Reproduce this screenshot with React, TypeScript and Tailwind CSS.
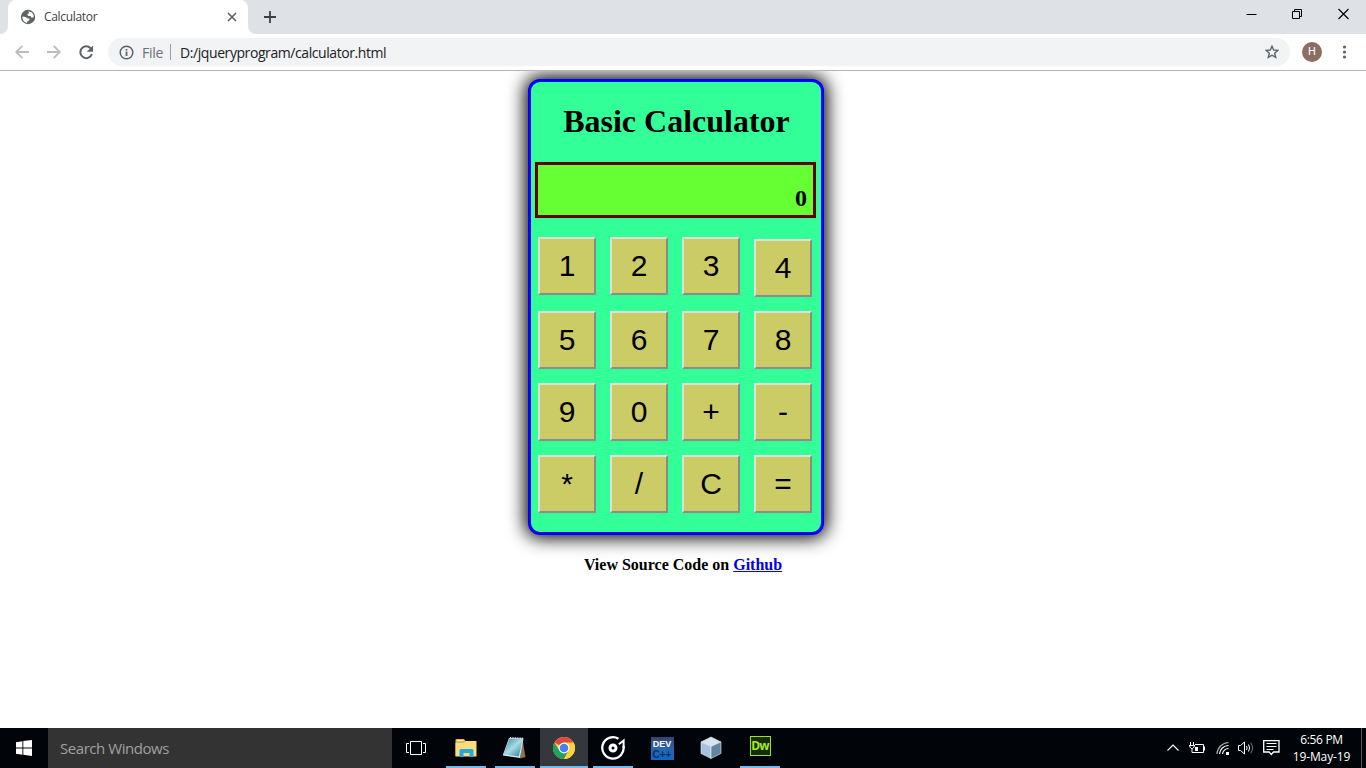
import React from "react";

const ui = "font-['Open_Sans','Noto_Sans',sans-serif]";

function Globe() {
  return (
    <svg width="16" height="16" viewBox="0 0 16 16">
      <circle cx="8" cy="8" r="7.2" fill="#5f6368" />
      <path d="M8.2 2.2 L12 3.4 L13.6 6 L13.6 8.6 L11 8.4 L10.6 7 L8.6 7 L7.4 6 L7.8 4.6 L9.2 4.4Z M2.4 7.6 L5.6 8 L7.6 9.4 L9.6 9.6 L9.2 11.4 L7.6 12 L7 13.9 A6 6 0 0 1 2.4 7.6Z" fill="#fff" />
    </svg>
  );
}

function TabStrip() {
  return (
    <div className="flex h-[34px] bg-[#dee1e6]">
      <div className="flex h-full w-2 bg-white">
        <div className="h-full w-full rounded-br-lg bg-[#dee1e6]" />
      </div>
      <div className="flex h-full w-60 items-center rounded-t-lg bg-white pl-3">
        <Globe />
        <span className="ml-2 text-[12px] leading-4 tracking-[-0.32px] text-[#3c4043]">Calculator</span>
        <svg className="mr-[11px] ml-auto" width="10" height="10" viewBox="0 0 10 10">
          <path d="M1 1 L9 9 M9 1 L1 9" stroke="#5f6368" strokeWidth="1.7" />
        </svg>
      </div>
      <div className="flex h-full w-2 bg-white">
        <div className="h-full w-full rounded-bl-lg bg-[#dee1e6]" />
      </div>
      <svg className="mt-[11px] ml-2" width="12" height="12" viewBox="0 0 12 12">
        <path d="M6 0 V12 M0 6 H12" stroke="#3c4043" strokeWidth="1.8" />
      </svg>
      <div className="ml-auto flex h-7 items-center">
        <svg className="mr-[35px]" width="11" height="12" viewBox="0 0 11 12">
          <path d="M0.5 6.5 H10.5" stroke="#000" />
        </svg>
        <svg className="mr-[35px]" width="11" height="12" viewBox="0 0 11 12">
          <path d="M0.5 3.5 H7.5 V10.5 H0.5Z M2.5 3.5 V1.5 H9.5 V8.5 H7.5" fill="none" stroke="#000" />
        </svg>
        <svg className="mr-[17px]" width="11" height="12" viewBox="0 0 11 12">
          <path d="M0.5 1 L10.5 11 M10.5 1 L0.5 11" stroke="#000" strokeWidth="1.1" />
        </svg>
      </div>
    </div>
  );
}

function Toolbar() {
  return (
    <div className="flex h-[37px] items-center border-b border-[#b5b4b6] bg-white pl-[15px]">
      <svg width="14" height="14" viewBox="0 0 14 14" fill="none" stroke="#babcbe" strokeWidth="1.8">
        <path d="M14 7 H1.5 M7.3 0.8 L1.2 7 L7.3 13.2" />
      </svg>
      <svg className="ml-[18px]" width="14" height="14" viewBox="0 0 14 14" fill="none" stroke="#babcbe" strokeWidth="1.8">
        <path d="M0 7 H12.5 M6.7 0.8 L12.8 7 L6.7 13.2" />
      </svg>
      <svg className="ml-[18px]" width="15" height="15" viewBox="0 0 15 15">
        <path d="M11.6 3.2 A5.9 5.9 0 1 0 12.9 9" fill="none" stroke="#5f6368" strokeWidth="2" />
        <path d="M14 0.5 V6.7 H7.8Z" fill="#5f6368" />
      </svg>
      <div className="ml-[14px] flex h-7 w-[1182px] items-center rounded-full bg-[#f1f3f4] pr-[11px] pl-[11px] text-[14px]">
        <svg width="15" height="15" viewBox="0 0 15 15">
          <circle cx="7.5" cy="7.5" r="6.3" fill="none" stroke="#5f6368" strokeWidth="1.5" />
          <path d="M7.5 6.6 V11 M7.5 4 V5.6" stroke="#5f6368" strokeWidth="1.8" />
        </svg>
        <span className="ml-2 w-[22px] tracking-[-0.3px] text-[#6d7175]">File</span>
        <div className="ml-[6px] h-4 w-px bg-[#9aa0a6]" />
        <span className="ml-[9px] tracking-[-0.42px] whitespace-nowrap text-[#202124]">D:/jqueryprogram/calculator.html</span>
        <svg className="ml-auto" width="14" height="14" viewBox="0 0 14 14">
          <path d="M7 1.2 L8.7 5 L12.9 5.4 L9.7 8.2 L10.7 12.4 L7 10.2 L3.3 12.4 L4.3 8.2 L1.1 5.4 L5.3 5Z" fill="none" stroke="#5f6368" strokeWidth="1.4" />
        </svg>
      </div>
      <div className="ml-3 flex h-5 w-5 items-center justify-center rounded-full bg-[#8d6e63] font-[Roboto,sans-serif] text-[11px] text-white">H</div>
      <svg className="ml-[20px]" width="5" height="14" viewBox="0 0 5 14" fill="#5f6368">
        <circle cx="2.5" cy="2" r="1.6" />
        <circle cx="2.5" cy="7" r="1.6" />
        <circle cx="2.5" cy="12" r="1.6" />
      </svg>
    </div>
  );
}

const rows = [
  ["1", "2", "3", "4"],
  ["5", "6", "7", "8"],
  ["9", "0", "+", "-"],
  ["*", "/", "C", "="],
];

function Key({ label }: { label: string }) {
  return (
    <button
      className={
        "h-[58px] w-[58px] border-2 border-t-[#dedede] border-r-[#8b8b8b] border-b-[#8b8b8b] border-l-[#dedede] bg-[#cccc66] p-0 text-center font-['Liberation_Sans',Arial,sans-serif] text-[30px] leading-[54px] text-black " +
        (label === "4" ? "mt-0.5" : "")
      }
    >
      {label}
    </button>
  );
}

function Calculator() {
  return (
    <div className="h-[456px] w-[296px] rounded-xl border-[3px] border-[#0000ff] bg-[#33ff99] shadow-[0_0_18px_3px_#000]">
      <h1 className="pt-[21px] pl-[1px] text-center text-[32px] leading-[37px] font-bold">Basic Calculator</h1>
      <div className="mt-[22px] ml-1 flex h-14 w-[281px] items-end justify-end border-[3px] border-[#660000] bg-[#66ff33] pr-[6px] pb-[3px] text-[24px] leading-[27px] font-bold">
        0
      </div>
      <div className="mt-[19px] ml-[7px] flex flex-col">
        {rows.map((row, i) => (
          <div key={i} className={"flex items-start gap-[14px] " + (i === 0 ? "h-[74px]" : "h-[72px]")}>
            {row.map((k) => (
              <Key key={k} label={k} />
            ))}
          </div>
        ))}
      </div>
    </div>
  );
}

function TaskItem({ open, active, children }: { open?: boolean; active?: boolean; children: React.ReactNode }) {
  return (
    <div className={"ml-px flex h-10 w-12 flex-col items-center " + (active ? "bg-[#34373b]" : "")}>
      <div className="flex h-[38px] items-center justify-center pt-0.5">{children}</div>
      <div className={"h-0.5 " + (active ? "w-12 " : "w-10 ") + (open || active ? "bg-[#76b9ed]" : "")} />
    </div>
  );
}

function Taskbar() {
  return (
    <div className="flex h-10 bg-[#010408]">
      <div className="flex w-12 items-center justify-center">
        <svg width="16" height="16" viewBox="0 0 16 16" fill="#fff">
          <path d="M0 2.2 L6.4 1.3 V7.5 H0Z M7.3 1.1 L16 0 V7.5 H7.3Z M0 8.4 H6.4 V14.7 L0 13.8Z M7.3 8.4 H16 V16 L7.3 14.8Z" />
        </svg>
      </div>
      <div className="flex w-[344px] items-center bg-[#333333] pl-3 text-[15px] tracking-[-0.45px] text-[#a0a0a0]">Search Windows</div>
      <div className="mr-px flex w-12 items-center justify-center">
        <svg width="20" height="16" viewBox="0 0 20 16" fill="none" stroke="#fff">
          <path d="M4.5 1.5 H15.5 V14.5 H4.5Z M3 3.5 H0.5 V12.5 H3 M17 3.5 H19.5 V12.5 H17" />
        </svg>
      </div>
      <TaskItem open>
        <svg className="-ml-px" width="22" height="20" viewBox="0 0 22 20">
          <path d="M0.5 2 Q0.5 1 1.5 1 H9 L10.5 3 H20 V18 H0.5Z" fill="#e8b64c" />
          <path d="M2 2.5 H8.5" stroke="#fff0b4" strokeWidth="1" />
          <path d="M0.5 5 H9 L11 3 H21.5 V18.5 H0.5Z" fill="#fddc7b" />
          <path d="M4.5 19 V12.5 Q4.5 11 6 11 H17 Q18.5 11 18.5 12.5 V19 H14.5 V15 H8.5 V19Z" fill="#25a8df" />
        </svg>
      </TaskItem>
      <TaskItem open>
        <svg className="-ml-0.5" width="24" height="24" viewBox="0 0 24 24">
          <defs>
            <linearGradient id="note" x1="0" y1="0" x2="1" y2="1">
              <stop offset="0" stopColor="#377f94" />
              <stop offset="0.5" stopColor="#a6dce8" />
              <stop offset="1" stopColor="#28758d" />
            </linearGradient>
          </defs>
          <path d="M20.5 3 L23.5 21 L18 22.5Z" fill="#8a7259" />
          <path d="M0.8 19.5 L7 2 L21.5 2.5 L18 22Z" fill="#e1edf0" />
          <path d="M1.2 18.5 L7.5 2.5 L21 3 L16.8 20.5Z" fill="url(#note)" />
          <path d="M8 1.8 L21.5 2.4" stroke="#e8e8e8" strokeWidth="1.5" strokeDasharray="1 0.7" />
        </svg>
      </TaskItem>
      <TaskItem active>
        <svg width="22" height="22" viewBox="0 0 22 22">
          <circle cx="11" cy="11" r="11" fill="#fdd23e" />
          <path d="M11 11 L1.47 5.5 A11 11 0 0 1 20.53 5.5Z" fill="#de4b3d" />
          <path d="M1.47 5.5 A11 11 0 0 0 11 22 L15.5 13.8 L11 11 L6.3 13.5Z" fill="#21a15e" />
          <path d="M11 5.5 H20.53 A11 11 0 0 1 11 22 L16 13.6Z" fill="#fdd23e" />
          <circle cx="11" cy="11" r="5.4" fill="#fff" />
          <circle cx="11" cy="11" r="4.3" fill="#4a80ee" />
        </svg>
      </TaskItem>
      <TaskItem open>
        <svg width="26" height="26" viewBox="0 0 26 26" fill="none" stroke="#fff">
          <path d="M18.5 3.7 A10.7 10.7 0 1 0 23.5 11" strokeWidth="2.3" />
          <circle cx="13" cy="13" r="3" strokeWidth="3" />
          <path d="M18.8 9.3 L23.6 5.5 V13" strokeWidth="2" />
        </svg>
      </TaskItem>
      <TaskItem>
        <div className="flex h-[23px] w-[23px] flex-col items-center overflow-hidden bg-linear-to-b from-[#33446f] via-[#2765ae] to-[#1267c4] font-['Liberation_Sans',sans-serif] font-bold">
          <span className="mt-px text-[9px] leading-[12px] text-white">DEV</span>
          <span className="text-[10px] leading-[9px] text-[#062c69]">C++</span>
        </div>
      </TaskItem>
      <TaskItem>
        <svg width="22" height="24" viewBox="0 0 22 24" stroke="#e9f1fa" strokeWidth="0.6">
          <path d="M1 6 L11 1 L21 6 L11 10.5Z" fill="#d5e4f2" />
          <path d="M1 6 L11 10.5 V22.5 L1 17.5Z" fill="#a7c0e1" />
          <path d="M21 6 L11 10.5 V22.5 L21 17.5Z" fill="#62849f" />
        </svg>
      </TaskItem>
      <TaskItem open>
        <div className="-mt-1 flex h-5 w-[21px] items-center justify-center border-[1.5px] border-[#9be611] bg-[#162b08] text-[12px] leading-none font-bold tracking-[-0.8px] text-[#a5ed17]">Dw</div>
      </TaskItem>
      <div className="ml-auto flex items-center">
        <svg width="12" height="12" viewBox="0 0 12 12" fill="none" stroke="#fff" strokeWidth="1.2">
          <path d="M0.5 8.5 L6 3 L11.5 8.5" />
        </svg>
        <svg className="ml-[10px]" width="17" height="14" viewBox="0 0 17 14" fill="none" stroke="#fff">
          <path d="M6 3.5 H14.5 V11.5 H4.5 M15.5 5.5 V9.5" />
          <path d="M6 6 H9 V10 H6Z" fill="#fff" stroke="none" />
          <path d="M1.5 1 V4 M4.5 1 V4 M0 4.5 H6 M0.8 4.5 V6 L2.3 7.5 H3.7 L5.2 6 V4.5 M3 7.5 V11.5 H5" />
        </svg>
        <svg className="ml-[10px]" width="14" height="14" viewBox="0 0 14 14" fill="none" stroke="#fff">
          <path d="M1 13 A12 12 0 0 1 12.5 1.5" stroke="#aaa" strokeWidth="1.2" />
          <path d="M3.5 13 A9 9 0 0 1 12.5 4.5 M6.5 13 A6 6 0 0 1 12.5 7.5" strokeWidth="1.2" />
          <path d="M10 11 H13 V14 H10Z" fill="#fff" stroke="none" />
        </svg>
        <svg className="ml-[8px]" width="16" height="14" viewBox="0 0 16 14" fill="none" stroke="#fff">
          <path d="M0.5 4.5 H2.5 L6.5 1 V13 L2.5 9.5 H0.5Z" />
          <path d="M8.5 5 Q9.7 7 8.5 9 M10.5 3.5 Q12.7 7 10.5 10.5" />
          <path d="M12.7 1.7 Q16.3 7 12.7 12.3" stroke="#777" />
        </svg>
        <svg className="ml-[9px]" width="17" height="16" viewBox="0 0 17 16" fill="none" stroke="#fff">
          <path d="M0.7 0.7 H16 V12 H10.5 L8.3 14.5 L6.2 12 H0.7Z" strokeWidth="1.3" />
          <path d="M3.5 3.5 H13.5 M3.5 6.5 H13.5 M3.5 9.5 H10.5" />
        </svg>
        <div className="ml-[12px] flex w-[59px] flex-col items-center pt-px text-[12px] leading-[17px] whitespace-nowrap text-white">
          <span className="-mt-[2px] tracking-[-0.35px]">6:56 PM</span>
          <span className="tracking-[-0.1px]">19-May-19</span>
        </div>
        <div className="mr-1 ml-[10px] h-10 w-px bg-[#56595c]" />
      </div>
    </div>
  );
}

export default function App() {
  return (
    <div className={"flex h-[768px] w-[1366px] flex-col overflow-hidden bg-white " + ui}>
      <TabStrip />
      <Toolbar />
      <main className="flex flex-1 flex-col items-center overflow-hidden pt-2 font-['Liberation_Serif','Times_New_Roman',serif] text-black">
        <div className="pr-[14px]">
          <Calculator />
        </div>
        <p className="mt-[21px] text-[16px] leading-[18px] font-bold">
          View Source Code on <a className="text-[#0000ee] underline">Github</a>
        </p>
      </main>
      <Taskbar />
    </div>
  );
}
